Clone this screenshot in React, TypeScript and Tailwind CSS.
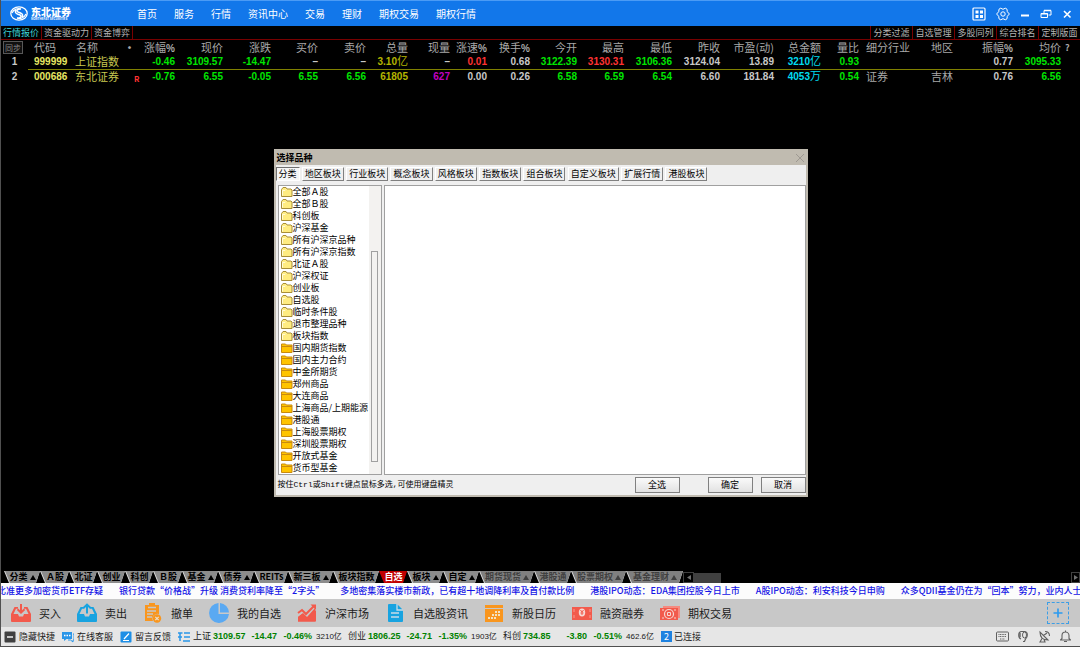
import type { ReactNode } from "react";
import clsx from "clsx";

const menu = ["首页", "服务", "行情", "资讯中心", "交易", "理财", "期权交易", "期权行情"];
const views = ["行情报价", "资金驱动力", "资金博弈"];
const tools = ["分类过滤", "自选管理", "多股同列", "综合排名", "定制版面"];

const G = "text-[#00e600]";
const R = "text-[#ff3232]";
const W = "text-[#c8c8c8]";
const Y = "text-[#b4b400]";
const C = "text-[#00dcf0]";
const M = "text-[#c000c0]";

type Cell = [string, string];

const columns: [string, string][] = [
   ["涨幅%", "w-[31px]"],
   ["现价", "w-[48px]"],
   ["涨跌", "w-[48px]"],
   ["买价", "w-[47px]"],
   ["卖价", "w-[48px]"],
   ["总量", "w-[42px]"],
   ["现量", "w-[42px]"],
   ["涨速%", "w-[37px]"],
   ["换手%", "w-[43px]"],
   ["今开", "w-[47px]"],
   ["最高", "w-[47px]"],
   ["最低", "w-[48px]"],
   ["昨收", "w-[48px]"],
   ["市盈(动)", "w-[54px]"],
   ["总金额", "w-[47px]"],
   ["量比", "w-[38px]"],
   ["细分行业", "w-[51px]"],
   ["地区", "w-[43px]"],
   ["振幅%", "w-[60px]"],
   ["均价", "w-[48px]"],
];

const stocks: { code: string; name: string; mark: string; cells: Cell[] }[] = [
   {
      code: "999999",
      name: "上证指数",
      mark: "",
      cells: [
         ["-0.46", G], ["3109.57", G], ["-14.47", G], ["–", W], ["–", W],
         ["3.10亿", Y], ["–", W], ["0.01", R], ["0.68", W], ["3122.39", G],
         ["3130.31", R], ["3106.36", G], ["3124.04", W], ["13.89", W], ["3210亿", C],
         ["0.93", G], ["", W], ["", W], ["0.77", W], ["3095.33", G],
      ],
   },
   {
      code: "000686",
      name: "东北证券",
      mark: "R",
      cells: [
         ["-0.76", G], ["6.55", G], ["-0.05", G], ["6.55", G], ["6.56", G],
         ["61805", Y], ["627", M], ["0.00", W], ["0.26", W], ["6.58", G],
         ["6.59", G], ["6.54", G], ["6.60", W], ["181.84", W], ["4053万", C],
         ["0.54", G], ["证券", W], ["吉林", W], ["0.76", W], ["6.56", G],
      ],
   },
];

const dialogTabs = ["分类", "地区板块", "行业板块", "概念板块", "风格板块", "指数板块", "组合板块", "自定义板块", "扩展行情", "港股板块"];

const paleFolders = ["全部Ａ股", "全部Ｂ股", "科创板", "沪深基金", "所有沪深京品种", "所有沪深京指数", "北证Ａ股", "沪深权证", "创业板", "自选股", "临时条件股", "退市整理品种", "板块指数"];
const goldFolders = ["国内期货指数", "国内主力合约", "中金所期货", "郑州商品", "大连商品", "上海商品/上期能源", "港股通", "上海股票期权", "深圳股票期权", "开放式基金", "货币型基金"];

const marketTabs: { name: string; width: string; arrow?: boolean; dim?: boolean; active?: boolean }[] = [
   { name: "分类", width: "w-[36px]", arrow: true },
   { name: "Ａ股", width: "w-[29px]" },
   { name: "北证", width: "w-[28px]" },
   { name: "创业", width: "w-[28px]" },
   { name: "科创", width: "w-[28px]" },
   { name: "Ｂ股", width: "w-[29px]" },
   { name: "基金", width: "w-[36px]", arrow: true },
   { name: "债券", width: "w-[36px]", arrow: true },
   { name: "REITs", width: "w-[34px]" },
   { name: "新三板", width: "w-[45px]", arrow: true },
   { name: "板块指数", width: "w-[46px]" },
   { name: "自选", width: "w-[28px]", active: true },
   { name: "板块", width: "w-[36px]", arrow: true },
   { name: "自定", width: "w-[36px]", arrow: true },
   { name: "期货现货", width: "w-[55px]", arrow: true, dim: true },
   { name: "港股通", width: "w-[37px]", dim: true },
   { name: "股票期权", width: "w-[55px]", arrow: true, dim: true },
   { name: "基金理财", width: "w-[57px]", arrow: true, dim: true },
];

const news = [
   "比准更多加密货币ETF存疑",
   "银行贷款“价格战”升级 消费贷利率降至“2字头”",
   "多地密集落实楼市新政，已有超十地调降利率及首付款比例",
   "港股IPO动态：EDA集团控股今日上市",
   "A股IPO动态：利安科技今日申购",
   "众多QDII基金仍在为“回本”努力，业内人士称投",
];

const quotes = [
   { name: "上证", price: "3109.57", change: "-14.47", pct: "-0.46%", amount: "3210亿" },
   { name: "创业", price: "1806.25", change: "-24.71", pct: "-1.35%", amount: "1903亿" },
   { name: "科创", price: "734.85", change: "-3.80", pct: "-0.51%", amount: "462.6亿" },
];

const Icon = ({ className, box = "0 0 20 20", children }: { className: string; box?: string; children: ReactNode }) => (
   <svg className={clsx("shrink-0", className)} viewBox={box} fill="none" aria-hidden="true">
      {children}
   </svg>
);

const actions: { name: string; art: ReactNode }[] = [
   {
      name: "买入",
      art: (
         <>
            <path d="M3.500 4H7v1.800H5L2.500 11h4.500l1 2.500h4l1-2.500h4.500L15 5.800h-2V4h3.500L20 11v7a1 1 0 0 1-1 1H1a1 1 0 0 1-1-1v-7z" fill="#f25a4c" />
            <path d="M10 1v8.500M6.500 6.200 10 9.600l3.500-3.400" stroke="#f25a4c" strokeWidth="2" />
         </>
      ),
   },
   {
      name: "卖出",
      art: (
         <>
            <path d="M3.500 4H7v1.800H5L2.500 11h4.500l1 2.500h4l1-2.500h4.500L15 5.800h-2V4h3.500L20 11v7a1 1 0 0 1-1 1H1a1 1 0 0 1-1-1v-7z" fill="#18a3e0" />
            <path d="M10 10.500V2M6.500 5 10 1.600 13.500 5" stroke="#18a3e0" strokeWidth="2" />
         </>
      ),
   },
   {
      name: "撤单",
      art: (
         <>
            <path d="M2 2h4V0h6v2h4v9a5 5 0 0 0-6 7H2z" fill="#f9961e" />
            <path d="M5 4.500h8M4 8h9M4 11h6M4 14h5" stroke="#c8c8c8" strokeWidth="1.400" />
            <circle cx="14" cy="15.500" r="4.200" fill="#f9961e" />
            <path d="m12.300 13.800 3.400 3.400m0-3.400-3.400 3.400" stroke="#e8e0d0" strokeWidth="1.200" />
         </>
      ),
   },
   {
      name: "我的自选",
      art: (
         <>
            <path d="M9.500 0A10 10 0 1 0 20 11H9.500z" fill="#5aa9f2" />
            <path d="M11 0a10 10 0 0 1 9 9.500h-9z" fill="#5aa9f2" />
         </>
      ),
   },
   {
      name: "沪深市场",
      art: (
         <>
            <path d="m1 18.500V14l5-4 4 4 8-9v13.500z" fill="#f25a4c" />
            <path d="M1 18.500V14l4-3 5 4 9-8v11.500z" fill="#f25a4c" />
            <path d="m1 10 4-3 4 4 8-8" stroke="#f25a4c" strokeWidth="2" />
            <path d="M13.500 1.500H19V7z" fill="#f25a4c" />
         </>
      ),
   },
   {
      name: "自选股资讯",
      art: (
         <>
            <path d="M4 1h8l6 6v11a1 1 0 0 1-1 1H4a1 1 0 0 1-1-1V2a1 1 0 0 1 1-1z" fill="#18a3e0" />
            <path d="M12 1v6h6M6 10h8M6 14h8" stroke="#c8dce8" strokeWidth="1.300" />
         </>
      ),
   },
   {
      name: "新股日历",
      art: (
         <>
            <path d="M1 2h18v3H1zM1 6h18v13H1z" fill="#f9961e" />
            <path d="M11 9h5M8 12h8M4 15h9" stroke="#f3e3c4" strokeWidth="2" strokeDasharray="2 1" />
         </>
      ),
   },
   {
      name: "融资融券",
      art: (
         <>
            <path d="M0 4h20v13H0z" fill="#f25a4c" />
            <path d="M2 6v3M2 12v3M18 6v3M18 12v3" stroke="#f79a90" strokeWidth="1" />
            <ellipse cx="10" cy="9.500" rx="3.200" ry="4" fill="#f6d8d4" />
            <path d="m8.500 7 1.500 2 1.500-2M10 9v3M8.500 10h3" stroke="#f25a4c" strokeWidth="1" />
         </>
      ),
   },
   {
      name: "期权交易",
      art: (
         <>
            <path d="M3 3h17v12H3z" fill="#f58a80" />
            <path d="M0 5h18v12H0z" fill="#f25a4c" />
            <circle cx="9" cy="11" r="4.500" stroke="#f6d8d4" strokeWidth="1.200" />
            <path d="M7.500 9.500h3v3h-3zM2 7h2M14 7h2M2 15h2M14 15h2" stroke="#f6d8d4" strokeWidth="1" />
         </>
      ),
   },
];

const TitleBar = () => (
   <header className="flex h-[26px] items-center border-t border-[#4b9bf5] bg-[#1277ea] pl-[9px] pr-[8px] text-white">
      <div className="flex w-[127px] items-center gap-[3px]">
         <Icon className="h-[15px] w-[18px]" box="0 0 18 15">
            <ellipse cx="9" cy="7.500" rx="8.200" ry="6.700" stroke="white" strokeWidth="1.300" />
            <path d="M2 7c2-4 6-5 9-4-4 0-5 2-3 3 3 1 6 2 4 5M16 8c-2 4-6 5-9 4 4 0 5-2 3-3C7 8 4 7 6 4" stroke="white" strokeWidth="1.400" />
         </Icon>
         <div className="flex flex-col">
            <span className="text-[10px] font-black leading-[11px]">东北证券</span>
            <span className="text-[3px] font-bold leading-[4px]">NORTHEAST SECURITIES</span>
         </div>
      </div>
      <nav className="flex gap-[17px] text-[10px]">
         {menu.map((item) => (
            <a key={item} href="#" className="whitespace-nowrap">
               {item}
            </a>
         ))}
      </nav>
      <div className="ml-auto flex items-center gap-[10px]">
         <button aria-label="应用">
            <Icon className="h-[14px] w-[14px]" box="0 0 14 14">
               <rect x="1" y="1" width="12" height="12" rx="1" stroke="white" strokeWidth="1.200" />
               <path d="M3.500 3.500h3v3h-3zM8 3.500h3v3H8zM3.500 8h3v3h-3zM8 8h3v3H8z" fill="white" />
            </Icon>
         </button>
         <button aria-label="设置">
            <Icon className="h-[14px] w-[14px]" box="0 0 14 14">
               <path d="M4.700 1.200 7 2.300l2.300-1.100 1.700 1 .3 2.500L13.400 7l-2.100 2.300-.3 2.500-1.700 1L7 11.700l-2.300 1.100-1.700-1-.3-2.500L.6 7l2.100-2.300.3-2.500z" stroke="white" strokeLinejoin="round" />
               <circle cx="7" cy="7" r="2.200" stroke="white" />
            </Icon>
         </button>
         <button aria-label="最小化">
            <Icon className="h-[12px] w-[10px]" box="0 0 10 12">
               <path d="M1 7.500h8" stroke="white" strokeWidth="2" />
            </Icon>
         </button>
         <button aria-label="还原">
            <Icon className="h-[12px] w-[12px]" box="0 0 12 12">
               <path d="M4 5V2.500h7v4.500H8.500" stroke="white" />
               <path d="M4 2.500h7M1 5.800h6.500" stroke="white" strokeWidth="1.600" />
               <path d="M1 5.500h6.500v4H1z" stroke="white" />
            </Icon>
         </button>
         <button aria-label="关闭">
            <Icon className="h-[10px] w-[10px]" box="0 0 10 10">
               <path d="m2 2 6.500 6.500m0-6.500L2 8.500" stroke="white" strokeWidth="1.600" />
            </Icon>
         </button>
      </div>
   </header>
);

const ViewBar = () => (
   <div className="flex h-[14px] justify-between border-b border-[#780000] text-[9px] leading-[13px] text-[#b4b4b4]">
      <div className="flex">
         {views.map((view, i) => (
            <button key={view} className={clsx("whitespace-nowrap border-r border-[#780000] px-[2px]", i === 0 && "text-[#3cd8d8]")}>
               {view}
            </button>
         ))}
      </div>
      <div className="flex">
         {tools.map((tool) => (
            <button key={tool} className="w-[42px] whitespace-nowrap border-l border-[#780000] text-center">
               {tool}
            </button>
         ))}
      </div>
   </div>
);

const QuoteTable = () => (
   <table className="w-full table-fixed border-collapse whitespace-nowrap text-right text-[11px] leading-[13px]">
      <colgroup>
         <col className="w-[27px]" />
         <col className="w-[44px]" />
         <col className="w-[50px]" />
         <col className="w-[22px]" />
         {columns.map(([name, width]) => (
            <col key={name} className={width} />
         ))}
         <col />
      </colgroup>
      <thead className="text-[#a8a8a8]">
         <tr className="h-[14px]">
            <th className="p-0 text-left font-normal">
               <button className="ml-[2px] block h-[13px] w-[20px] border border-[#585858] bg-[#101010] text-[8px] leading-[11px] text-[#888888]">
                  同步
               </button>
            </th>
            <th className="p-0 pl-[6px] text-left font-normal">代码</th>
            <th className="p-0 pl-[4px] text-left font-normal">名称</th>
            <th className="p-0 pl-[2px] text-left font-bold">·</th>
            {columns.map(([name]) => (
               <th key={name} className="p-0 font-normal">
                  {name.endsWith("%") ? (
                     <>
                        {name.slice(0, -1)}
                        <span className="font-[Liberation_Sans] text-[10px] font-bold leading-none">%</span>
                     </>
                  ) : (
                     name
                  )}
               </th>
            ))}
            <th className="p-0 pl-[4px] text-left text-[9px] font-bold">?</th>
         </tr>
      </thead>
      <tbody>
         {stocks.map((stock, i) => {
            const line = i === 0 && "border-b border-[#808000]";
            return (
               <tr key={stock.code} className="h-[15px]">
                  <td className="p-0 text-center font-[Liberation_Sans] text-[10px] font-bold text-[#c8c8c8]">{i + 1}</td>
                  <td className={clsx("p-0 pl-[6px] text-left font-[Liberation_Sans] text-[10px] font-bold text-[#e6e664]", line)}>{stock.code}</td>
                  <td className={clsx("p-0 pl-[3px] text-left text-[#c8c850]", line)}>{stock.name}</td>
                  <td className={clsx("p-0 pl-[12px] text-left align-bottom text-[8px] font-bold leading-[10px] text-[#ff3232]", line)}>{stock.mark}</td>
                  {stock.cells.map(([text, color], n) => {
                     const unit = text.match(/[亿万]$/)?.[0];
                     const isWord = n === 16 || n === 17;
                     return (
                        <td
                           key={n}
                           className={clsx(
                              "p-0",
                              n === 16 && "pl-[7px] text-left",
                              !isWord && "font-[Liberation_Sans,Noto_Sans_CJK_SC] text-[10px] font-bold",
                              isWord && "text-[#a8a8a8]",
                              !isWord && color,
                              line,
                           )}
                        >
                           {unit ? (
                              <>
                                 {text.slice(0, -1)}
                                 <span className="text-[11px] font-normal leading-none">{unit}</span>
                              </>
                           ) : (
                              text
                           )}
                        </td>
                     );
                  })}
                  <td className="p-0" />
               </tr>
            );
         })}
      </tbody>
   </table>
);

const Folder = ({ gold }: { gold?: boolean }) => (
   <Icon className="h-[10px] w-[12px]" box="0 0 12 10">
      {gold ? (
         <>
            <path d="M.5 1h4l1 1h5.500v7.500H.5z" fill="#ffc400" stroke="#c88a10" />
            <path d="M1 3.500h10" stroke="#c88a10" />
         </>
      ) : (
         <>
            <path d="M.5 9.500v-7L2 .5h3l1 1.500h4l1 1v6.500z" fill="#ffec80" stroke="#a88e38" />
            <path d="M1.500 8.500v-5H4l1-1" stroke="#fffbd8" />
         </>
      )}
   </Icon>
);

const DialogButton = ({ children, className }: { children: ReactNode; className?: string }) => (
   <button className={clsx("h-[16px] w-[45px] border border-[#808080] bg-linear-to-b from-[#fafafa] to-[#e2e2e2] leading-[14px]", className)}>
      {children}
   </button>
);

const PickDialog = () => (
   <div className="absolute inset-0 flex items-center justify-center">
      <section
         role="dialog"
         aria-label="选择品种"
         className="w-[534px] border-2 border-[#c0bbb0] bg-[#efefef] text-[9px] text-black"
      >
         <div className="flex h-[14px] items-center justify-between bg-[#c0bbb0] px-px">
            <h2 className="font-bold">选择品种</h2>
            <button aria-label="关闭">
               <Icon className="h-[10px] w-[10px]" box="0 0 10 10">
                  <path d="m1 1 8 8m0-8L1 9" stroke="#96918a" strokeWidth=".8" />
               </Icon>
            </button>
         </div>
         <div className="flex w-[432px] justify-between pt-[2px]" role="tablist">
            {dialogTabs.map((tab, i) => (
               <button
                  key={tab}
                  role="tab"
                  aria-selected={i === 0}
                  className={clsx(
                     "h-[14px] whitespace-nowrap border px-[2px] leading-[12px]",
                     i === 0
                        ? "border-b-white border-l-[#707070] border-r-white border-t-[#707070] bg-[#f6f6f6]"
                        : "border-b-[#808080] border-l-white border-r-[#808080] border-t-white",
                  )}
               >
                  {tab}
               </button>
            ))}
         </div>
         <div className="mt-[4px] flex gap-[2px] pl-[2px]">
            <div className="flex h-[290px] w-[104px] border border-[#a0a0a0] bg-white">
               <ul className="w-[90px] whitespace-nowrap pl-[2px]">
                  {paleFolders.map((name) => (
                     <li key={name} className="flex h-[12px] items-center leading-[12px]">
                        <Folder />
                        {name}
                     </li>
                  ))}
                  {goldFolders.map((name) => (
                     <li key={name} className="flex h-[12px] items-center leading-[12px]">
                        <Folder gold />
                        {name}
                     </li>
                  ))}
               </ul>
               <div className="flex flex-1 flex-col items-center bg-[#f3f2f0] pb-[12px]">
                  <div className="mt-auto h-[211px] w-[7px] border border-[#a0a0a0] bg-[#f3f2f0]" />
               </div>
            </div>
            <div className="flex-1 border border-[#a0a0a0] bg-white" />
         </div>
         <div className="flex items-center pb-[2px] pl-[2px] pt-[2px]">
            <p className="mr-auto font-[Liberation_Mono,Noto_Sans_CJK_SC,monospace] text-[8px]">按住Ctrl或Shift键点鼠标多选,可使用键盘精灵</p>
            <DialogButton className="mr-[28px]">全选</DialogButton>
            <DialogButton className="mr-[8px]">确定</DialogButton>
            <DialogButton>取消</DialogButton>
         </div>
      </section>
   </div>
);

const MarketTabs = () => (
   <div className="flex h-[13px] items-end bg-black pl-[3px]">
      {marketTabs.map((tab) => (
         <button
            key={tab.name}
            className={clsx(
               "h-[12px] shrink-0 pl-px [clip-path:polygon(0_0,100%_0,calc(100%-4px)_100%,5px_100%)]",
               tab.width,
               tab.active ? "bg-[#c00000]" : "bg-[#dcdcdc]",
            )}
         >
            <span
               className={clsx(
                  "flex h-full items-center justify-center whitespace-nowrap text-[9px] leading-[12px] [clip-path:polygon(0_0,100%_0,calc(100%-4px)_100%,5px_100%)]",
                  tab.active && "bg-[#c00000] font-bold text-white",
                  tab.dim && "bg-[#808080] font-bold text-[#404040]",
                  !tab.active && !tab.dim && "bg-[#8c8c8c] font-bold text-black",
               )}
            >
               {tab.name}
               {tab.arrow && (
                  <Icon className="ml-[2px] h-[5px] w-[6px]" box="0 0 6 5">
                     <path d="m3 0 3 5H0z" fill="currentColor" />
                  </Icon>
               )}
            </span>
         </button>
      ))}
      <div className="flex flex-1 items-center">
         <button aria-label="向左" className="flex h-[11px] w-[11px] items-center justify-center border border-[#404040]">
            <Icon className="h-[5px] w-[4px]" box="0 0 4 5">
               <path d="M4 0v5L0 2.500z" fill="#707070" />
            </Icon>
         </button>
         <div className="h-[10px] w-[27px] bg-[#404040]" />
         <button aria-label="向右" className="ml-auto flex h-[11px] w-[9px] items-center justify-center border border-[#404040]">
            <Icon className="h-[5px] w-[4px]" box="0 0 4 5">
               <path d="M0 0v5l4-2.500z" fill="#707070" />
            </Icon>
         </button>
      </div>
   </div>
);

const NewsTicker = () => (
   <div className="flex h-[16px] items-center overflow-hidden bg-[#fcfcfc]">
      <div className="-ml-[4px] flex gap-4 whitespace-nowrap text-[9px] font-medium text-[#1414e6]">
         {news.map((item) => (
            <a key={item} href="#">
               {item}
            </a>
         ))}
      </div>
   </div>
);

const ActionBar = () => (
   <div className="flex h-[28px] items-center bg-[#c8c8c8] pl-[10px] pr-[11px] text-[11px] text-[#202020]">
      <div className="flex gap-4">
         {actions.map((action) => (
            <button key={action.name} className="flex items-center gap-2 whitespace-nowrap">
               <Icon className="h-[20px] w-[20px]">{action.art}</Icon>
               {action.name}
            </button>
         ))}
      </div>
      <button aria-label="添加" className="ml-auto flex h-[22px] w-[22px] items-center justify-center border border-dashed border-[#3c9ee6]">
         <Icon className="h-[10px] w-[10px]" box="0 0 10 10">
            <path d="M5 .5v9M.5 5h9" stroke="#2a9af0" strokeWidth="1.600" />
         </Icon>
      </button>
   </div>
);

const StatusBar = () => (
   <footer className="flex h-[19px] items-center whitespace-nowrap bg-[#e6e6e6] pl-[3px] pr-[8px] text-[9px] text-[#202020]">
      <div className="flex gap-[7px]">
         <button className="flex items-center gap-[3px]">
            <Icon className="h-[12px] w-[12px]" box="0 0 12 12">
               <rect x=".5" y=".5" width="11" height="11" rx="1" fill="#404040" />
               <path d="M3 6h6" stroke="white" strokeWidth="1.400" />
            </Icon>
            隐藏快捷
         </button>
         <button className="flex items-center gap-[3px]">
            <Icon className="h-[12px] w-[12px]" box="0 0 12 12">
               <path d="M0 1h10v7H4.500L2 10V8H0z" fill="#2a96e8" />
               <path d="M11 3h1v6h-1v2L8.500 9H6" stroke="#2a96e8" />
               <path d="M2 4.500h1.500m1 0H6m1 0h1.500" stroke="white" strokeWidth="1.300" />
            </Icon>
            在线客服
         </button>
         <button className="flex items-center gap-[3px]">
            <Icon className="h-[12px] w-[12px]" box="0 0 12 12">
               <rect x=".5" y=".5" width="11" height="11" rx="1" fill="#1e8fe6" />
               <path d="m4 8 5-5.500M3 9.500h6" stroke="white" strokeWidth="1.200" />
            </Icon>
            留言反馈
         </button>
         <div className="flex items-center gap-[3px]">
            <Icon className="h-[12px] w-[12px]" box="0 0 12 12">
               <path d="M0 2h4.500M2 2v8M0 6h4M6 2h6M6 6h6M5 10h7" stroke="#2a96e8" strokeWidth="1.500" />
            </Icon>
            {quotes.map((q) => (
               <div key={q.name} className="flex w-[152px] items-center font-[Liberation_Sans,Noto_Sans_CJK_SC] font-bold text-[#008200]">
                  <span className="w-[20px] font-normal text-[#202020]">{q.name}</span>
                  <span className="w-[32px]">{q.price}</span>
                  <span className="w-[32px] text-right">{q.change}</span>
                  <span className="w-[35px] text-right">{q.pct}</span>
                  <span className="pl-[4px] text-[8px] font-normal text-[#202020]">{q.amount}</span>
               </div>
            ))}
         </div>
      </div>
      <div className="flex items-center gap-[2px] pl-[6px]">
         <span className="flex h-[11px] w-[11px] items-center justify-center bg-[#1e82e0] text-[9px] text-white">2</span>
         已连接
      </div>
      <div className="ml-auto flex items-center gap-[8px] text-[#606060]">
         <button aria-label="键盘">
            <Icon className="h-[13px] w-[13px]" box="0 0 13 13">
               <rect x=".5" y="2" width="12" height="9" rx="1" stroke="currentColor" />
               <path d="M2.500 4.500h8M2.500 6.500h8M4 9h5" stroke="currentColor" strokeDasharray="1 .6" />
            </Icon>
         </button>
         <button aria-label="客服">
            <Icon className="h-[13px] w-[13px]" box="0 0 13 13">
               <path d="M4 9C1 8 1 2 4 1.500h4C11 2 11 7 8.500 9l-1 2.500H6" stroke="currentColor" strokeWidth="1.200" />
               <ellipse cx="7.500" cy="5" rx="2" ry="3" stroke="currentColor" />
               <path d="M3 3v4" stroke="currentColor" strokeWidth="1.400" />
            </Icon>
         </button>
         <button aria-label="信号">
            <Icon className="h-[13px] w-[13px]" box="0 0 13 13">
               <path d="M2 2c0 5 3 8 8 8zM5.500 5.500 9 3M7 1.500c3 0 4.500 1.500 4.500 4.500M4 8.500 2 12h5L6 9.500" stroke="currentColor" strokeWidth="1.100" />
            </Icon>
         </button>
         <button aria-label="通知">
            <Icon className="h-[13px] w-[13px]" box="0 0 13 13">
               <path d="M1.500 10h10L10 8.500V5.500a3.500 3.500 0 0 0-7 0v3zM6.500 2V.5M5 11.500h3" stroke="currentColor" strokeWidth="1.100" strokeLinejoin="round" />
            </Icon>
         </button>
      </div>
   </footer>
);

const App = () => {
   return (
      <div className="relative flex min-h-screen flex-col overflow-hidden border-b border-l border-[#505050] bg-black font-[Noto_Sans_CJK_SC,sans-serif]">
         <TitleBar />
         <ViewBar />
         <main className="flex-1">
            <QuoteTable />
         </main>
         <PickDialog />
         <MarketTabs />
         <NewsTicker />
         <ActionBar />
         <StatusBar />
      </div>
   );
};

export default App;
